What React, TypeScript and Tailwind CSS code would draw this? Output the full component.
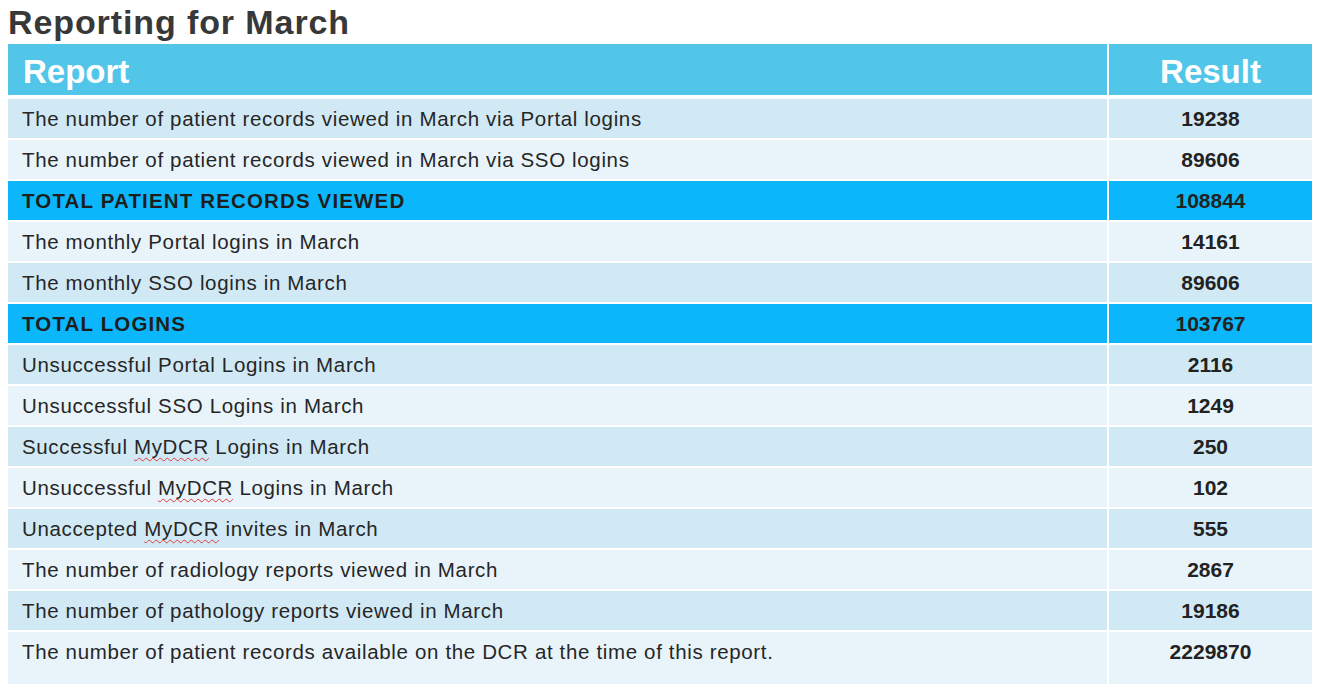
import React from "react";

type Row = { label: React.ReactNode; value: string; kind: "dark" | "light" | "total"; last?: boolean };

const My = () => (
  <span className="underline decoration-wavy decoration-[#e23b3b] decoration-1 underline-offset-[3px] [text-decoration-skip-ink:none]">
    MyDCR
  </span>
);

const rows: Row[] = [
  { label: "The number of patient records viewed in March via Portal logins", value: "19238", kind: "dark" },
  { label: "The number of patient records viewed in March via SSO logins", value: "89606", kind: "light" },
  { label: "TOTAL PATIENT RECORDS VIEWED", value: "108844", kind: "total" },
  { label: "The monthly Portal logins in March", value: "14161", kind: "light" },
  { label: "The monthly SSO logins in March", value: "89606", kind: "dark" },
  { label: "TOTAL LOGINS", value: "103767", kind: "total" },
  { label: "Unsuccessful Portal Logins in March", value: "2116", kind: "dark" },
  { label: "Unsuccessful SSO Logins in March", value: "1249", kind: "light" },
  { label: <>Successful <My /> Logins in March</>, value: "250", kind: "dark" },
  { label: <>Unsuccessful <My /> Logins in March</>, value: "102", kind: "light" },
  { label: <>Unaccepted <My /> invites in March</>, value: "555", kind: "dark" },
  { label: "The number of radiology reports viewed in March", value: "2867", kind: "light" },
  { label: "The number of pathology reports viewed in March", value: "19186", kind: "dark" },
  {
    label: "The number of patient records available on the DCR at the time of this report.",
    value: "2229870",
    kind: "light",
    last: true,
  },
];

const bg = {
  dark: "bg-[#d1e9f5]",
  light: "bg-[#e8f4fa]",
  total: "bg-[#0bb6fa]",
};

export default function App() {
  return (
    <div className="w-[1330px] h-[700px] bg-white font-['Liberation_Sans',Arial,sans-serif] text-[#222]">
      <h1 className="h-[44px] pl-[8px] text-[34px] leading-[44px] font-bold tracking-[0.9px] text-[#383838]">
        Reporting for March
      </h1>
      <div className="ml-[8px] grid grid-cols-[1099px_203px] gap-x-[2px]">
        <div className="h-[51px] bg-[#52c6e8] pl-[15px] pt-[5px] text-[33px] leading-[46px] font-bold text-white">
          Report
        </div>
        <div className="h-[51px] bg-[#52c6e8] pt-[5px] text-center text-[33px] leading-[46px] font-bold text-white">
          Result
        </div>
        <div className="col-span-2 h-[4px]" />
        {rows.map((r, i) => (
          <React.Fragment key={i}>
            <div
              className={`${bg[r.kind]} ${r.last ? "h-[52px]" : "h-[39px]"} pl-[14px] leading-[39px] ${
                r.kind === "total"
                  ? "text-[20.5px] font-bold tracking-[1.15px] text-[#1e1e1e]"
                  : "text-[20.5px] tracking-[0.65px] text-[#262626]"
              }`}
            >
              {r.label}
            </div>
            <div
              className={`${bg[r.kind]} ${r.last ? "h-[52px]" : "h-[39px]"} text-center text-[21px] leading-[39px] font-bold text-[#222]`}
            >
              {r.value}
            </div>
            {i < rows.length - 1 && <div className="col-span-2 h-[2px]" />}
          </React.Fragment>
        ))}
      </div>
    </div>
  );
}
